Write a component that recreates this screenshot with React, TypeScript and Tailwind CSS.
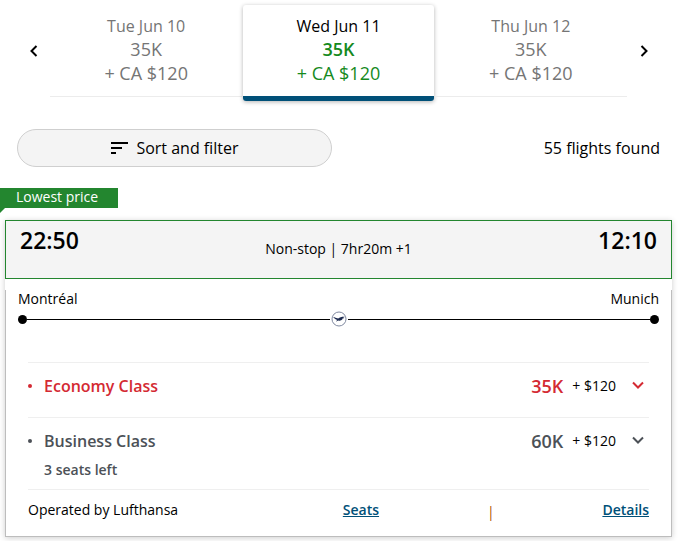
import clsx from "clsx";

const days = [
    { date: "Tue Jun 10", points: "35K", cash: "+ CA $120", selected: false },
    { date: "Wed Jun 11", points: "35K", cash: "+ CA $120", selected: true },
    { date: "Thu Jun 12", points: "35K", cash: "+ CA $120", selected: false },
];

const cabins = [
    { name: "Economy Class", points: "35K", cash: "+ $120", seats: "", color: "text-[#d42a33]" },
    { name: "Business Class", points: "60K", cash: "+ $120", seats: "3 seats left", color: "text-[#4c5157]" },
];

function Chevron({ d, className }: { d: string; className: string }) {
    return (
        <svg viewBox="0 0 12 12" className={className} fill="none" stroke="currentColor" strokeWidth="2">
            <path d={d} />
        </svg>
    );
}

function DateTabs() {
    return (
        <div className="flex pt-[5px]">
            <button aria-label="Previous day" className="flex h-[91px] w-[50px] shrink-0 items-center justify-end pr-[10px]">
                <Chevron d="M8.5 1 L3.5 6 L8.5 11" className="h-3 w-3" />
            </button>
            <div className="grid grow grid-cols-3">
                {days.map((day) => (
                    <button
                        key={day.date}
                        className={clsx(
                            "flex flex-col items-center pt-[9px]",
                            day.selected
                                ? "mx-px rounded-[3px] border-b-[5px] border-[#005078] pb-[10px] text-black shadow-[0_1px_4px_rgba(0,0,0,0.3)]"
                                : "mb-1 border-b border-[#ececec] pb-[10px] text-[#757575]"
                        )}
                    >
                        <span className="text-base leading-6">{day.date}</span>
                        <span className={clsx("text-lg leading-[23px]", day.selected && "font-semibold text-[#158a1d]")}>
                            {day.points}
                        </span>
                        <span className={clsx("text-lg leading-[25px]", day.selected && "text-[#158a1d]")}>
                            {day.cash}
                        </span>
                    </button>
                ))}
            </div>
            <button aria-label="Next day" className="flex h-[91px] w-[53px] shrink-0 items-center pl-[11px]">
                <Chevron d="M3.5 1 L8.5 6 L3.5 11" className="h-3 w-3" />
            </button>
        </div>
    );
}

function RouteLine() {
    return (
        <div className="flex items-center">
            <span className="h-[9px] w-[9px] rounded-full bg-black" />
            <span className="h-px grow bg-black" />
            <svg viewBox="0 0 16 16" className="mx-px h-4 w-4" fill="none">
                <circle cx="8" cy="8" r="7" stroke="#8089a0" />
                <path
                    d="M2 5.8 C3.8 6.6 5.4 7.2 7.2 7.6 C8.8 6.2 11 5.6 14.2 5.8 L12 6.7 L13.2 7 L10.8 7.9 L11.6 8.3 C10.4 9.4 8.8 10 7.6 9.5 L4.8 10.4 L6.3 9 C4.6 8.4 3 7.2 2 5.8 Z"
                    fill="#1d2b50"
                />
            </svg>
            <span className="h-px grow bg-black" />
            <span className="h-[9px] w-[9px] rounded-full bg-black" />
        </div>
    );
}

function FlightCard() {
    return (
        <article className="mt-3 mr-2 ml-[5px] shadow-[0_1px_6px_rgba(0,0,0,0.2)]">
            <div className="flex h-[59px] justify-between border border-[#23862f] bg-[#f4f4f4] px-[14px]">
                <time className="pt-1 text-[23px] leading-[31px] font-semibold">22:50</time>
                <p className="pt-[18px] text-sm leading-5">Non-stop | 7hr20m +1</p>
                <time className="pt-1 text-[23px] leading-[31px] font-semibold">12:10</time>
            </div>

            <div className="mt-[11px] border border-t-0 border-[#bdbdbd]">
                <div className="px-3">
                    <div className="flex justify-between text-sm leading-[18px]">
                        <span>Montréal</span>
                        <span>Munich</span>
                    </div>
                    <div className="pt-[3px]">
                        <RouteLine />
                    </div>
                </div>

                <div className="mt-[35px] px-[22px]">
                    <ul>
                        {cabins.map((cabin) => (
                            <li
                                key={cabin.name}
                                className={clsx("border-t border-[#efefef] pt-[11px]", cabin.seats ? "pb-[7px]" : "pb-[19px]")}
                            >
                                <button className="flex w-full items-start text-left">
                                    <span className={clsx("flex h-6 w-4 items-center", cabin.color)}>
                                        <span className="h-1 w-1 rounded-full bg-current" />
                                    </span>
                                    <span className={clsx("grow font-semibold", cabin.color)}>
                                        <span className="block text-base leading-6">{cabin.name}</span>
                                        {cabin.seats && (
                                            <span className="block pt-[5px] text-sm leading-6">{cabin.seats}</span>
                                        )}
                                    </span>
                                    <span className={clsx("mr-[9px] text-lg leading-6 font-semibold", cabin.color)}>
                                        {cabin.points}
                                    </span>
                                    <span className="mr-4 text-sm leading-6">{cabin.cash}</span>
                                    <Chevron
                                        d="M1 3.5 L6 8.5 L11 3.5"
                                        className={clsx("mt-[5px] mr-[5px] h-3 w-3", cabin.color)}
                                    />
                                </button>
                            </li>
                        ))}
                    </ul>
                    <div className="flex justify-between border-t border-[#efefef] pt-[10px] pb-[14px] text-sm leading-5">
                        <span className="w-1/3">Operated by Lufthansa</span>
                        <a href="#seats" className="font-semibold text-[#005078] underline">Seats</a>
                        <span className="pt-0.5 text-[#b05200]">|</span>
                        <a href="#details" className="font-semibold text-[#005078] underline">Details</a>
                    </div>
                </div>
            </div>
        </article>
    );
}

export default function App() {
    return (
        <main className="bg-white pb-1 font-['Open_Sans','Noto_Sans',sans-serif] text-black">
            <DateTabs />

            <div className="mt-7 flex items-center justify-between pr-5 pl-[17px]">
                <button className="flex h-[38px] w-[315px] items-center justify-center gap-2 rounded-full border border-[#cfcfcf] bg-[#f4f4f4] text-base">
                    <svg viewBox="0 0 18 14" className="h-[14px] w-[18px]" fill="none" stroke="currentColor" strokeWidth="2">
                        <path d="M1 2 H18 M1 7 H12 M1 12 H6" />
                    </svg>
                    Sort and filter
                </button>
                <p className="text-base">55 flights found</p>
            </div>

            <div className="relative mt-[21px] h-5 w-[118px] bg-[#23862f] pl-4 text-sm leading-[18px] text-white">
                Lowest price
                <svg viewBox="0 0 5 5" className="absolute top-full left-0 h-[5px] w-[5px]">
                    <path d="M0 0 H5 L0 5 Z" fill="#23862f" />
                </svg>
            </div>

            <FlightCard />
        </main>
    );
}
